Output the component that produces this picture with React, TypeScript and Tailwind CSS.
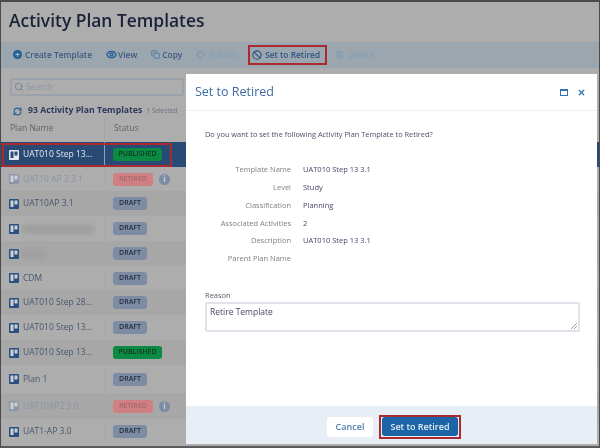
import { Ban, Copy, Eye, RefreshCw, Search, Trash2, X } from 'lucide-react';

type Status = 'PUBLISHED' | 'RETIRED' | 'DRAFT';

interface PlanRow {
  name: string;
  status: Status;
  height: string;
  shade: string;
  selected?: boolean;
  blurWidth?: string;
}

const rows: PlanRow[] = [
  { name: 'UAT010 Step 13...', status: 'PUBLISHED', height: 'h-[25px]', shade: 'bg-[#2a4a76]', selected: true },
  { name: 'UAT10 AP 2 3.1', status: 'RETIRED', height: 'h-[24px]', shade: 'bg-[#adadad]' },
  { name: 'UAT10AP 3.1', status: 'DRAFT', height: 'h-[25px]', shade: 'bg-[#a7a7a7]' },
  { name: '', status: 'DRAFT', height: 'h-[25px]', shade: 'bg-[#adadad]', blurWidth: 'w-[72px]' },
  { name: '', status: 'DRAFT', height: 'h-[25px]', shade: 'bg-[#a7a7a7]', blurWidth: 'w-[24px]' },
  { name: 'CDM', status: 'DRAFT', height: 'h-[24px]', shade: 'bg-[#adadad]' },
  { name: 'UAT010 Step 28...', status: 'DRAFT', height: 'h-[25px]', shade: 'bg-[#a7a7a7]' },
  { name: 'UAT010 Step 13...', status: 'DRAFT', height: 'h-[25px]', shade: 'bg-[#adadad]' },
  { name: 'UAT010 Step 13...', status: 'PUBLISHED', height: 'h-[25px]', shade: 'bg-[#a7a7a7]' },
  { name: 'Plan 1', status: 'DRAFT', height: 'h-[28px]', shade: 'bg-[#adadad]' },
  { name: 'UAT10AP2 3.0', status: 'RETIRED', height: 'h-[26px]', shade: 'bg-[#a7a7a7]' },
  { name: 'UAT1-AP 3.0', status: 'DRAFT', height: 'h-[25px]', shade: 'bg-[#adadad]' },
];

const details = [
  ['Template Name', 'UAT010 Step 13 3.1'],
  ['Level', 'Study'],
  ['Classification', 'Planning'],
  ['Associated Activities', '2'],
  ['Description', 'UAT010 Step 13 3.1'],
  ['Parent Plan Name', ''],
];

function BoardIcon({ muted, light }: { muted?: boolean; light?: boolean }) {
  const frame = light ? '#e4e8ee' : muted ? '#8b97a6' : '#2a4f80';
  const inner = light ? '#2a4a76' : '#ccd1d7';
  return (
    <svg width="10" height="10" viewBox="0 0 10 10" className="shrink-0">
      <rect width="10" height="10" rx="1" fill={frame} />
      <rect x="1.5" y="1.5" width="3" height="6.5" fill={inner} />
      <rect x="5.5" y="1.5" width="3" height="4" fill={inner} />
    </svg>
  );
}

function StatusBadge({ status }: { status: Status }) {
  if (status === 'PUBLISHED') {
    return (
      <span className="flex h-[13px] w-[49px] items-center justify-center rounded-[3px] bg-[#0b8a43] text-[7px] font-semibold text-[#0d3520]">
        PUBLISHED
      </span>
    );
  }
  if (status === 'RETIRED') {
    return (
      <span className="flex h-[13px] w-[40px] items-center justify-center rounded-[3px] bg-[#d08083] text-[7px] font-semibold text-[#a5666b]">
        RETIRED
      </span>
    );
  }
  return (
    <span className="flex h-[13px] w-[34px] items-center justify-center rounded-[3px] bg-[#7d8ca3] text-[7px] font-semibold text-[#1f2a3c]">
      DRAFT
    </span>
  );
}

function PlanTableRow({ row }: { row: PlanRow }) {
  const retired = row.status === 'RETIRED';
  return (
    <div className={`flex items-center ${row.height} ${row.shade}`}>
      <div
        className={`flex h-full w-[104px] items-center gap-[3px] border-r pl-[8px] ${
          row.selected ? 'border-[#8ba0bb]' : 'border-[#a9a9a9]'
        }`}
      >
        <BoardIcon muted={retired} light={row.selected} />
        {row.blurWidth ? (
          <span className={`h-[10px] ${row.blurWidth} rounded bg-[#9f9f9f] blur-[2px]`} />
        ) : (
          <span
            className={`ml-[1px] whitespace-nowrap text-[8.5px] ${
              row.selected ? 'text-[#e3e7ec]' : retired ? 'text-[#8a95a5]' : 'text-[#47576f]'
            }`}
          >
            {row.name}
          </span>
        )}
      </div>
      <div className="flex items-center gap-[6px] pl-[8px]">
        <StatusBadge status={row.status} />
        {retired && (
          <span className="flex h-[11px] w-[11px] items-center justify-center rounded-full bg-[#7b8ca5] text-[8px] font-bold text-[#c7ccd4]">
            i
          </span>
        )}
      </div>
    </div>
  );
}

function Toolbar() {
  return (
    <div className="flex h-[26px] items-center bg-[#9ca6ae] pl-[12px] text-[8.4px] font-semibold text-[#3c5a82]">
      <span className="flex items-center gap-[3px]">
        <span className="flex h-[9px] w-[9px] items-center justify-center rounded-full bg-[#1f5e96] text-[9px] leading-none text-[#b4c0c9]">
          +
        </span>
        Create Template
      </span>
      <span className="ml-[14px] flex items-center gap-[1px]">
        <Eye size={11} strokeWidth={2.8} className="text-[#1f5e96]" />
        View
      </span>
      <span className="ml-[14px] flex items-center gap-[2px]">
        <Copy size={9} strokeWidth={2} className="text-[#3d6b9c]" />
        Copy
      </span>
      <span className="ml-[14px] flex items-center gap-[3px] text-[#86a0b5]">
        <svg width="9" height="9" viewBox="0 0 10 10" fill="none" stroke="#7f9bb4" strokeWidth="1.2">
          <circle cx="5" cy="5" r="3.2" />
          <path d="M5 0v2M5 8v2M0 5h2M8 5h2" />
        </svg>
        Publish
      </span>
      <span className="ml-[10px] flex h-[20px] w-[79px] items-center gap-[3px] border-2 border-[#a92b30] pl-[2px] text-[#2f5585]">
        <Ban size={10} strokeWidth={2.6} className="text-[#234f82]" />
        Set to Retired
      </span>
      <span className="ml-[8px] flex items-center gap-[4px] text-[#86a0b5]">
        <Trash2 size={9} strokeWidth={2.6} className="text-[#7f9bb4]" />
        Delete
      </span>
    </div>
  );
}

function SetToRetiredModal() {
  return (
    <div className="absolute left-[186px] top-[74px] flex h-[370px] w-[411px] flex-col bg-white font-['Open_Sans',sans-serif]">
      <div className="flex h-[37px] items-center justify-between border-b border-[#eef0f3] pl-[9px] pr-[11px]">
        <span className="text-[12.5px] text-[#3e6ba3]">Set to Retired</span>
        <span className="flex items-center gap-[9px] text-[#2f74b5]">
          <span className="h-[7px] w-[8px] border border-t-2 border-[#2f74b5]" />
          <X size={9} strokeWidth={3.4} />
        </span>
      </div>
      <div className="flex-1 px-[19px] pt-[18px]">
        <p className="text-[7.4px] leading-[10px] text-[#4c4f6b]">
          Do you want to set the following Activity Plan Template to Retired?
        </p>
        <div className="mt-[22px] flex flex-col">
          {details.map(([label, value]) => (
            <div key={label} className="flex h-[17.8px] items-center text-[7.5px]">
              <span className="w-[86px] text-right text-[#7d8088]">{label}</span>
              <span className="ml-[12px] text-[#44476e]">{value}</span>
            </div>
          ))}
        </div>
        <div className="mt-[22px] text-[7.5px] text-[#5a5d66]">Reason</div>
        <div className="relative mt-[1px] h-[30px] w-[375px] rounded-[2px] border-2 border-[#dfe4ea] pl-[3px] pt-[2px] text-[8.5px] text-[#45485f]">
          Retire Template
          <svg width="6" height="6" viewBox="0 0 6 6" className="absolute bottom-[1px] right-[1px]" stroke="#8f8f8f" strokeWidth="0.8">
            <path d="M0 6 6 0M3 6l3-3" />
          </svg>
        </div>
      </div>
      <div className="flex h-[38px] items-center bg-[#e8eef5] pl-[141px] pt-[3px]">
        <span className="flex h-[20px] w-[46px] items-center justify-center rounded-[3px] bg-white text-[9px] font-semibold text-[#4f7cab]">
          Cancel
        </span>
        <span className="ml-[6px] flex h-[24px] w-[82px] items-center justify-center border-2 border-[#a92b30]">
          <span className="flex h-[19px] w-[76px] items-center justify-center rounded-[3px] bg-[#1c64a8] text-[9px] font-semibold text-[#e6edf5]">
            Set to Retired
          </span>
        </span>
      </div>
    </div>
  );
}

export default function App() {
  return (
    <div className="relative h-[448px] w-[600px] overflow-hidden bg-[#adadad] font-['Open_Sans',sans-serif] blur-[0.5px]">
      <div className="flex h-full flex-col border-x border-y-2 border-[#4a4a4a] border-b-[#5a5a5a]">
        <h1 className="h-[40px] pl-[8px] pt-[2px] text-[17.4px] font-semibold leading-[32px] text-[#192238]">
          Activity Plan Templates
        </h1>
        <Toolbar />
        <div className="flex h-[28px] items-end pl-[9px]">
          <div className="flex h-[18px] w-[174px] items-center gap-[2px] rounded-[2px] border-2 border-[#9aa2ab] pl-[2px] text-[8.5px] text-[#8b95a3]">
            <Search size={10} className="text-[#6f7e90]" />
            Search
          </div>
        </div>
        <div className="mt-[8px] flex h-[14px] items-center pl-[12px]">
          <RefreshCw size={9} strokeWidth={3} className="text-[#2c5d92]" />
          <span className="ml-[6px] text-[8.7px] font-bold text-[#2c3b5c]">93 Activity Plan Templates</span>
          <span className="ml-[4px] text-[6.5px] text-[#66707e]">1 Selected</span>
        </div>
        <div className="flex h-[24px] items-start text-[8.5px] text-[#5e6670]">
          <span className="h-full w-[104px] border-r border-[#a3a3a3] pl-[9px] leading-[20px]">Plan Name</span>
          <span className="pl-[9px] leading-[20px]">Status</span>
        </div>
        <div className="relative flex flex-col">
          {rows.map((row, i) => (
            <PlanTableRow key={i} row={row} />
          ))}
          <div className="absolute left-[1px] top-[1px] h-[24px] w-[170px] border-2 border-[#a92b30]" />
        </div>
      </div>
      <SetToRetiredModal />
    </div>
  );
}
